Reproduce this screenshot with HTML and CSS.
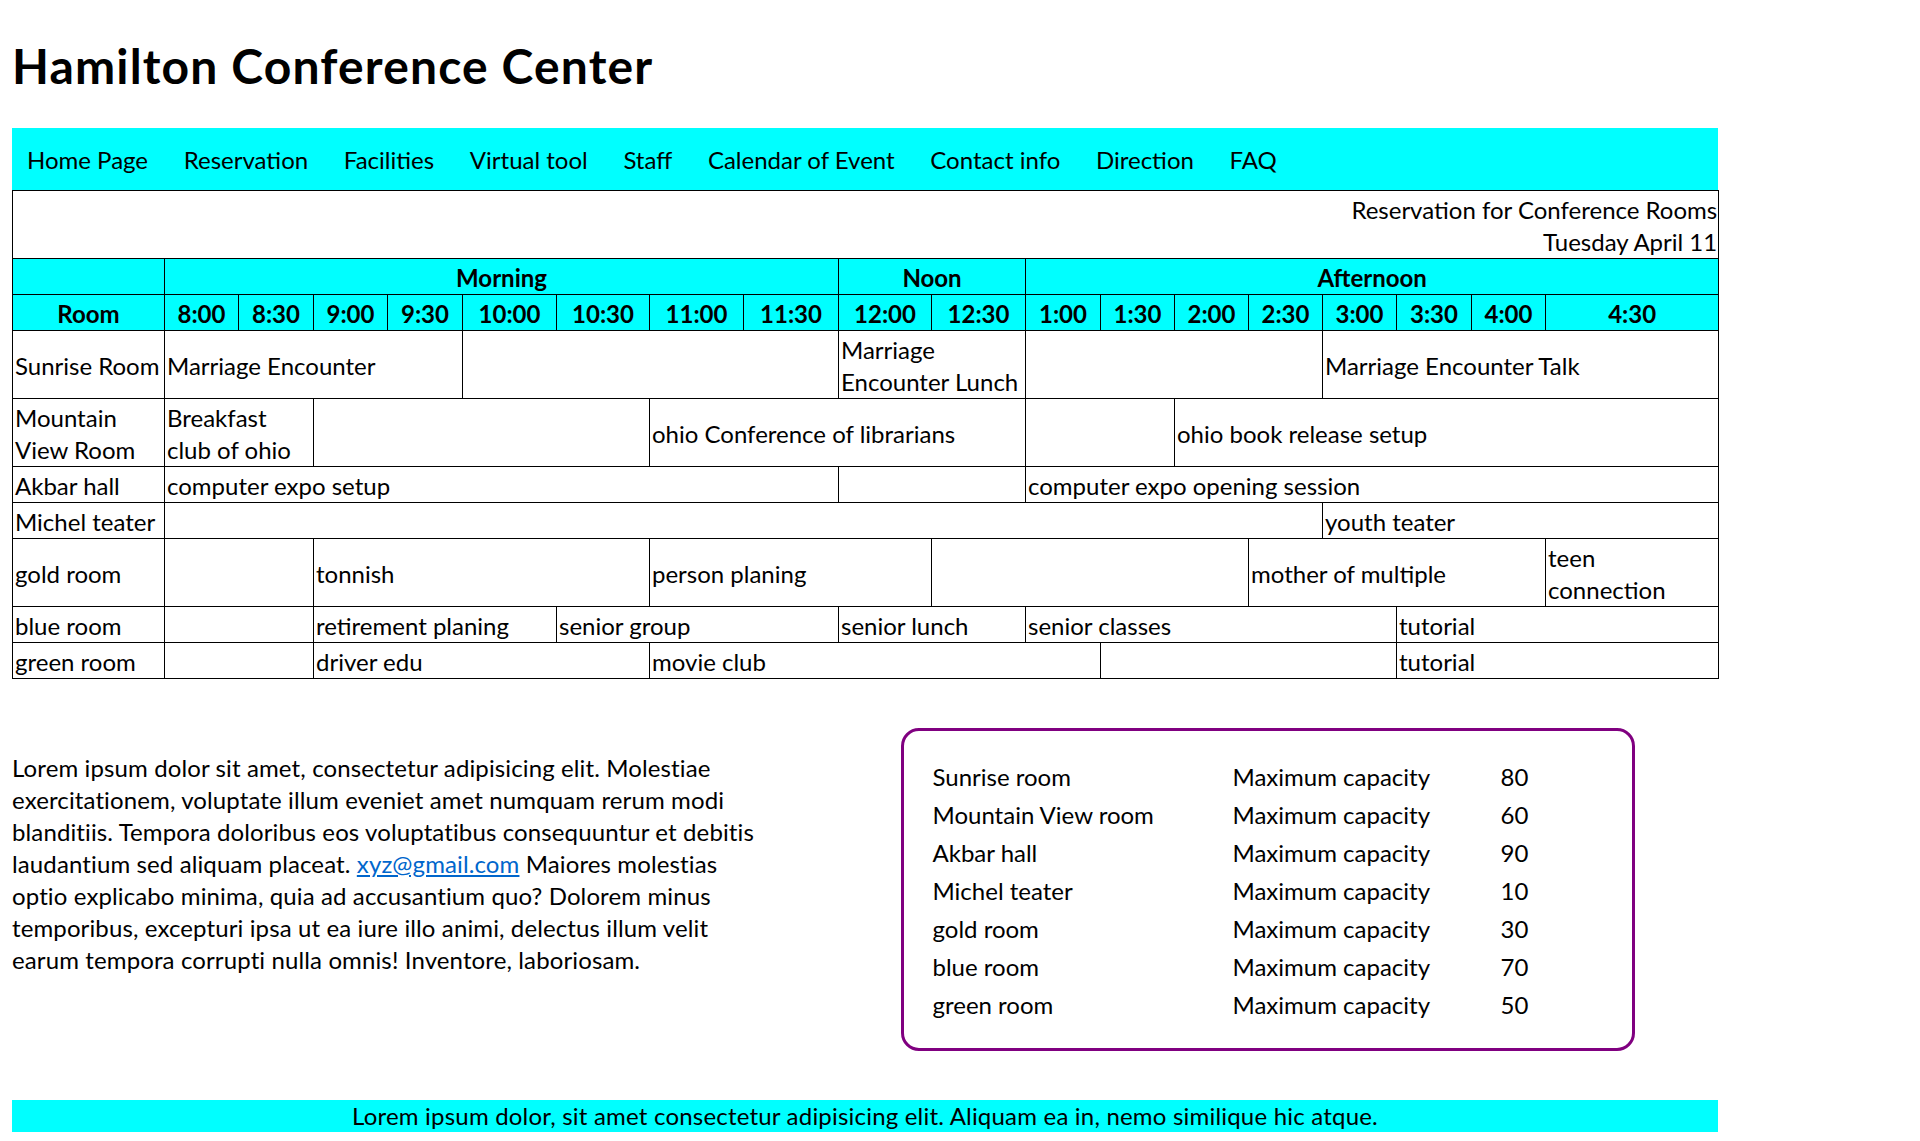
FILE: index.html
```html
<!DOCTYPE html>
<html lang="en">
<head>
<meta charset="utf-8">
<title>Hamilton Conference Center</title>
<link rel="stylesheet" href="styles.css">
</head>
<body>
<h1 class="title">Hamilton Conference Center</h1>
<nav class="topnav">
  <ul class="nav-list">
    <li><a class="nav-link" href="#">Home Page</a></li>
    <li><a class="nav-link" href="#">Reservation</a></li>
    <li><a class="nav-link" href="#">Facilities</a></li>
    <li><a class="nav-link" href="#">Virtual tool</a></li>
    <li><a class="nav-link" href="#">Staff</a></li>
    <li><a class="nav-link" href="#">Calendar of Event</a></li>
    <li><a class="nav-link" href="#">Contact info</a></li>
    <li><a class="nav-link" href="#">Direction</a></li>
    <li><a class="nav-link" href="#">FAQ</a></li>
  </ul>
</nav>
<table class="schedule">
  <colgroup>
    <col class="c152"><col class="c74"><col class="c75"><col class="c74"><col class="c75">
    <col class="c94"><col class="c93"><col class="c94"><col class="c95">
    <col class="c93"><col class="c94">
    <col class="c75"><col class="c74"><col class="c74"><col class="c74"><col class="c74"><col class="c75"><col class="c74">
    <col class="c173">
  </colgroup>
  <thead>
    <tr><td class="sched-caption" colspan="19">Reservation for Conference Rooms<br>Tuesday April 11</td></tr>
    <tr class="head-row"><th></th><th colspan="8">Morning</th><th colspan="2">Noon</th><th colspan="8">Afternoon</th></tr>
    <tr class="head-row"><th>Room</th><th>8:00</th><th>8:30</th><th>9:00</th><th>9:30</th><th>10:00</th><th>10:30</th><th>11:00</th><th>11:30</th><th>12:00</th><th>12:30</th><th>1:00</th><th>1:30</th><th>2:00</th><th>2:30</th><th>3:00</th><th>3:30</th><th>4:00</th><th>4:30</th></tr>
  </thead>
  <tbody>
    <tr><td>Sunrise Room</td><td colspan="4">Marriage Encounter</td><td colspan="4"></td><td colspan="2">Marriage Encounter Lunch</td><td colspan="4"></td><td colspan="4">Marriage Encounter Talk</td></tr>
    <tr><td>Mountain View Room</td><td colspan="2">Breakfast club of ohio</td><td colspan="4"></td><td colspan="4">ohio Conference of librarians</td><td colspan="2"></td><td colspan="6">ohio book release setup</td></tr>
    <tr><td>Akbar hall</td><td colspan="8">computer expo setup</td><td colspan="2"></td><td colspan="8">computer expo opening session</td></tr>
    <tr><td>Michel teater</td><td colspan="14"></td><td colspan="4">youth teater</td></tr>
    <tr><td>gold room</td><td colspan="2"></td><td colspan="4">tonnish</td><td colspan="3">person planing</td><td colspan="4"></td><td colspan="4">mother of multiple</td><td>teen connection</td></tr>
    <tr><td>blue room</td><td colspan="2"></td><td colspan="3">retirement planing</td><td colspan="3">senior group</td><td colspan="2">senior lunch</td><td colspan="5">senior classes</td><td colspan="3">tutorial</td></tr>
    <tr><td>green room</td><td colspan="2"></td><td colspan="4">driver edu</td><td colspan="5">movie club</td><td colspan="4"></td><td colspan="3">tutorial</td></tr>
  </tbody>
</table>
<div class="lower">
  <p class="intro">Lorem ipsum dolor sit amet, consectetur adipisicing elit. Molestiae exercitationem, voluptate illum eveniet amet numquam rerum modi blanditiis. Tempora doloribus eos voluptatibus consequuntur et debitis laudantium sed aliquam placeat. <a class="mail" href="#">xyz@gmail.com</a> Maiores molestias optio explicabo minima, quia ad accusantium quo? Dolorem minus temporibus, excepturi ipsa ut ea iure illo animi, delectus illum velit earum tempora corrupti nulla omnis! Inventore, laboriosam.</p>
  <div class="capacity-box">
    <table class="capacity">
      <colgroup><col class="cap-name"><col class="cap-label"><col class="cap-num"></colgroup>
      <tr><td>Sunrise room</td><td>Maximum capacity</td><td>80</td></tr>
      <tr><td>Mountain View room</td><td>Maximum capacity</td><td>60</td></tr>
      <tr><td>Akbar hall</td><td>Maximum capacity</td><td>90</td></tr>
      <tr><td>Michel teater</td><td>Maximum capacity</td><td>10</td></tr>
      <tr><td>gold room</td><td>Maximum capacity</td><td>30</td></tr>
      <tr><td>blue room</td><td>Maximum capacity</td><td>70</td></tr>
      <tr><td>green room</td><td>Maximum capacity</td><td>50</td></tr>
    </table>
  </div>
</div>
<footer class="footer">Lorem ipsum dolor, sit amet consectetur adipisicing elit. Aliquam ea in, nemo similique hic atque.</footer>
</body>
</html>
```
FILE: styles.css
```css
html, body {
  background: #fff;
}
body {
  margin: 0;
  padding: 0 12px;
  font-family: "Segoe UI", Lato, sans-serif;
  font-size: 24px;
  line-height: 32px;
  color: #000;
}
.title {
  margin: 32px 0;
  padding-top: 2px;
  height: 62px;
  font-size: 48px;
  line-height: 64px;
  font-weight: 700;
  letter-spacing: 1.15px;
}
.topnav {
  width: 1706px;
  background: #00ffff;
}
.nav-list {
  list-style: none;
  margin: 0;
  padding: 0;
  display: flex;
  gap: 5.7px;
}
.nav-link {
  display: block;
  padding: 16px 15px 14px;
  color: #000;
  text-decoration: none;
}
.schedule {
  width: 1706px;
  table-layout: fixed;
  border-collapse: collapse;
}
.schedule td,
.schedule th {
  border: 1px solid #000;
  padding: 2.5px 2px 0.5px;
  vertical-align: middle;
  text-align: left;
  font-weight: 400;
}
.schedule .head-row th {
  background: #00ffff;
  text-align: center;
  font-weight: 700;
}
.schedule .sched-caption {
  text-align: right;
  padding-right: 1px;
}
.c152 { width: 152px; }
.c74 { width: 74px; }
.c75 { width: 75px; }
.c93 { width: 93px; }
.c94 { width: 94px; }
.c95 { width: 95px; }
.c173 { width: 173px; }
.lower {
  display: flex;
  align-items: flex-start;
  margin-top: 49px;
}
.intro {
  width: 756px;
  margin: 24px 133px 0 0;
  letter-spacing: 0.12px;
}
.mail {
  color: #0066cc;
}
.capacity-box {
  box-sizing: border-box;
  width: 734px;
  border: 3px solid #800080;
  border-radius: 18px;
  padding: 24px;
}
.capacity {
  width: 100%;
  table-layout: fixed;
  border-spacing: 3px;
  border-collapse: separate;
}
.capacity td {
  padding: 2.5px 1.5px 0.5px;
}
.cap-name { width: 297px; }
.cap-label { width: 265px; }
.footer {
  width: 1706px;
  margin-top: 49px;
  background: #00ffff;
  text-align: center;
  letter-spacing: 0.2px;
}
```
